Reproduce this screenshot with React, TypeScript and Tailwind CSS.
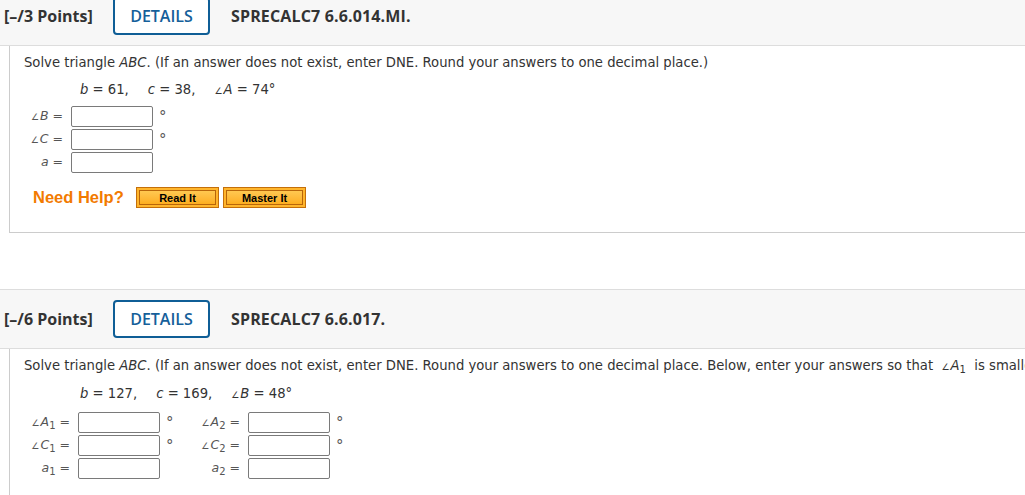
import React from 'react';

const sans = "font-['DejaVu_Sans',Verdana,sans-serif]";

function Header({ points, code }: { points: string; code: string }) {
  return (
    <div className="h-[60px] bg-[#f7f7f7] border-y border-[#dddddd] flex items-center font-['Open_Sans',sans-serif] font-bold text-[16px] text-[#333333]">
      <span className="ml-[4px] w-[109px] whitespace-nowrap">[–/{points} Points]</span>
      <div className="h-[38px] w-[97px] border-2 border-[#0f5e96] rounded-[4px] bg-white flex items-center justify-center text-[#15609a] font-semibold">
        DETAILS
      </div>
      <span className="ml-[21px] whitespace-nowrap tracking-[0.15px]">{code}</span>
    </div>
  );
}

function Ang({ l, sub }: { l: string; sub?: string }) {
  return (
    <span className="whitespace-nowrap">
      <span className="text-[9px] mr-[1px]">∠</span>
      <i>{l}</i>
      {sub && <sub className="text-[10px] not-italic">{sub}</sub>}
    </span>
  );
}

function Var({ l, sub }: { l: string; sub?: string }) {
  return (
    <span className="whitespace-nowrap">
      <i>{l}</i>
      {sub && <sub className="text-[10px]">{sub}</sub>}
    </span>
  );
}

function Box() {
  return <div className="h-[21px] w-[82px] border border-[#7a7a7a] rounded-[2px] bg-white" />;
}

function Row({ label, deg, lw }: { label: React.ReactNode; deg?: boolean; lw: string }) {
  return (
    <div className="flex items-center h-[21px]">
      <div className={`${lw} text-right pr-[8px] text-[12.5px] text-[#555555] whitespace-nowrap`}>
        {label} =
      </div>
      <Box />
      <div className="w-[20px] pl-[6px] text-[15px] leading-[15px] text-[#555555] mt-[1px]">{deg ? '°' : ''}</div>
    </div>
  );
}

function Help() {
  const btn = 'h-[21px] w-[83px] border border-[#c46f0a] bg-[#ffb52c] p-[2px] flex';
  const inner =
    "flex-1 border border-[#b8650a] bg-gradient-to-b from-[#ffc850] to-[#fdae1e] flex items-center justify-center font-['Liberation_Sans',Arial,sans-serif] font-bold text-[11px] text-black";
  return (
    <div className="flex items-center">
      <span className="ml-[23px] w-[103px] font-['Liberation_Sans',Arial,sans-serif] font-bold text-[16.5px] text-[#f27a00] -mt-[1px]">
        Need Help?
      </span>
      <div className={btn}>
        <div className={inner}>Read It</div>
      </div>
      <div className={`${btn} ml-[4px]`}>
        <div className={inner}>Master It</div>
      </div>
    </div>
  );
}

function Gap() {
  return <span className="inline-block w-[19px]" />;
}

export default function App() {
  return (
    <div className="w-[1025px] h-[495px] overflow-hidden bg-white">
      <div className="-mt-[14px]">
        <Header points="3" code="SPRECALC7 6.6.014.MI." />
      </div>
      <div className={`ml-[9px] h-[187px] border-l border-b border-[#cccccc] pt-[8px] pl-[14px] text-[13.2px] text-[#333333] ${sans}`}>
        <div className="leading-[18px] whitespace-nowrap">
          Solve triangle <i>ABC</i>. (If an answer does not exist, enter DNE. Round your answers to one decimal place.)
        </div>
        <div className="mt-[9px] ml-[56px] leading-[18px] whitespace-nowrap">
          <Var l="b" /> = 61,<Gap /><Var l="c" /> = 38,<Gap /><Ang l="A" /> = 74°
        </div>
        <div className="mt-[6px] -ml-[14px] flex flex-col gap-[2px]">
          <Row lw="w-[61px]" label={<Ang l="B" />} deg />
          <Row lw="w-[61px]" label={<Ang l="C" />} deg />
          <Row lw="w-[61px]" label={<Var l="a" />} />
        </div>
        <div className="mt-[13px] -ml-[14px]">
          <Help />
        </div>
      </div>
      <div className="h-[56px]" />
      <Header points="6" code="SPRECALC7 6.6.017." />
      <div className={`ml-[9px] h-[200px] border-l border-[#cccccc] pt-[8px] pl-[14px] text-[13.2px] text-[#333333] ${sans}`}>
        <div className="leading-[18px] whitespace-nowrap">
          Solve triangle <i>ABC</i>. (If an answer does not exist, enter DNE. Round your answers to one decimal place. Below, enter your answers so that&nbsp; <Ang l="A" sub="1" /> &nbsp;is smaller than <Ang l="A" sub="2" />.)
        </div>
        <div className="mt-[9px] ml-[56px] leading-[18px] whitespace-nowrap">
          <Var l="b" /> = 127,<Gap /><Var l="c" /> = 169,<Gap /><Ang l="B" /> = 48°
        </div>
        <div className="mt-[8px] -ml-[14px] flex">
          <div className="flex flex-col gap-[2px]">
            <Row lw="w-[68px]" label={<Ang l="A" sub="1" />} deg />
            <Row lw="w-[68px]" label={<Ang l="C" sub="1" />} deg />
            <Row lw="w-[68px]" label={<Var l="a" sub="1" />} />
          </div>
          <div className="flex flex-col gap-[2px]">
            <Row lw="w-[68px]" label={<Ang l="A" sub="2" />} deg />
            <Row lw="w-[68px]" label={<Ang l="C" sub="2" />} deg />
            <Row lw="w-[68px]" label={<Var l="a" sub="2" />} />
          </div>
        </div>
        <div className="mt-[15px] -ml-[14px]">
          <Help />
        </div>
      </div>
    </div>
  );
}
